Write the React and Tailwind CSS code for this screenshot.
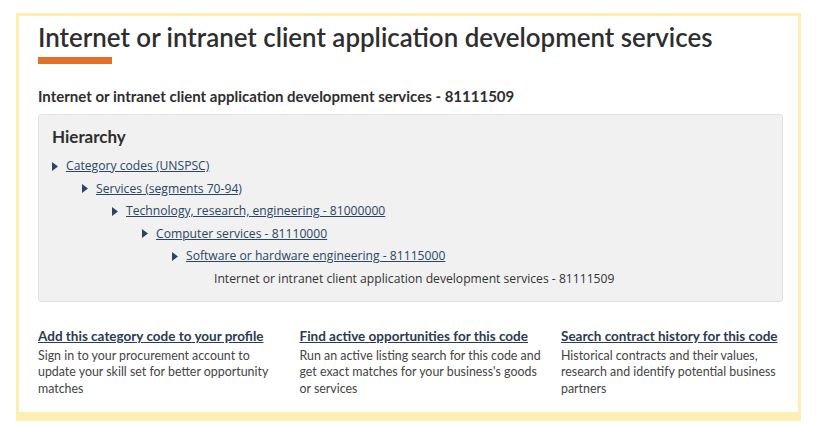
import React from "react";

const Tri = () => (
  <svg width="6" height="9" viewBox="0 0 6 9" className="shrink-0">
    <path d="M0 0 L6 4.5 L0 9 Z" fill="#2b4662" />
  </svg>
);

const items = [
  "Category codes (UNSPSC)",
  "Services (segments 70-94)",
  "Technology, research, engineering - 81000000",
  "Computer services - 81110000",
  "Software or hardware engineering - 81115000",
];

const indents = ["ml-0", "ml-[30px]", "ml-[60px]", "ml-[90px]", "ml-[120px]"];

export default function App() {
  return (
    <div className="w-[830px] h-[435px] bg-white pt-[13px] pl-[16px]">
      <div className="w-[785px] h-[408px] border-[#fdeeb2] border-t-[3px] border-l-[3px] border-r-[3px] border-b-[9px] pl-[19px] pr-[15px] pt-[5px] bg-white">
        <h1 className="font-['Lato',sans-serif] font-semibold text-[25.9px] leading-[32px] text-[#2e2e2e]">
          Internet or intranet client application development services
        </h1>
        <div className="mt-[4px] w-[74px] h-[7px] bg-[#e1702a]" />
        <div className="mt-[23px] font-['Lato',sans-serif] font-bold text-[15px] leading-[18px] text-[#2e2e2e]">
          Internet or intranet client application development services - 81111509
        </div>
        <div className="mt-[9px] h-[188px] bg-[#f1f1f1] border border-[#e2e2e2] rounded-[3px] pl-[13px] pt-[12px]">
          <div className="font-['Lato',sans-serif] font-bold text-[17px] leading-[20px] text-[#2e2e2e]">
            Hierarchy
          </div>
          <div className="mt-[8px] font-['Open_Sans',sans-serif] text-[12.15px] leading-[22.5px]">
            {items.map((t, i) => (
              <div key={i} className={"flex items-center gap-[8px] " + indents[i]}>
                <Tri />
                <a href="#" className="text-[#2b4662] underline">{t}</a>
              </div>
            ))}
            <div className="ml-[162px] text-[#333]">
              Internet or intranet client application development services - 81111509
            </div>
          </div>
        </div>
        <div className="mt-[26px] grid grid-cols-[245px_245px_1fr] gap-x-[16.5px] font-['Lato',sans-serif] text-[12.4px] leading-[16.5px]">
          <div>
            <a href="#" className="font-bold underline text-[#2b3a4f] text-[13.5px]">Add this category code to your profile</a>
            <p className="mt-[2px] text-[#444]">Sign in to your procurement account to update your skill set for better opportunity matches</p>
          </div>
          <div>
            <a href="#" className="font-bold underline text-[#2b3a4f] text-[13.5px]">Find active opportunities for this code</a>
            <p className="mt-[2px] text-[#444]">Run an active listing search for this code and get exact matches for your business's goods or services</p>
          </div>
          <div>
            <a href="#" className="font-bold underline text-[#2b3a4f] text-[13.5px]">Search contract history for this code</a>
            <p className="mt-[2px] text-[#444]">Historical contracts and their values, research and identify potential business partners</p>
          </div>
        </div>
      </div>
    </div>
  );
}
